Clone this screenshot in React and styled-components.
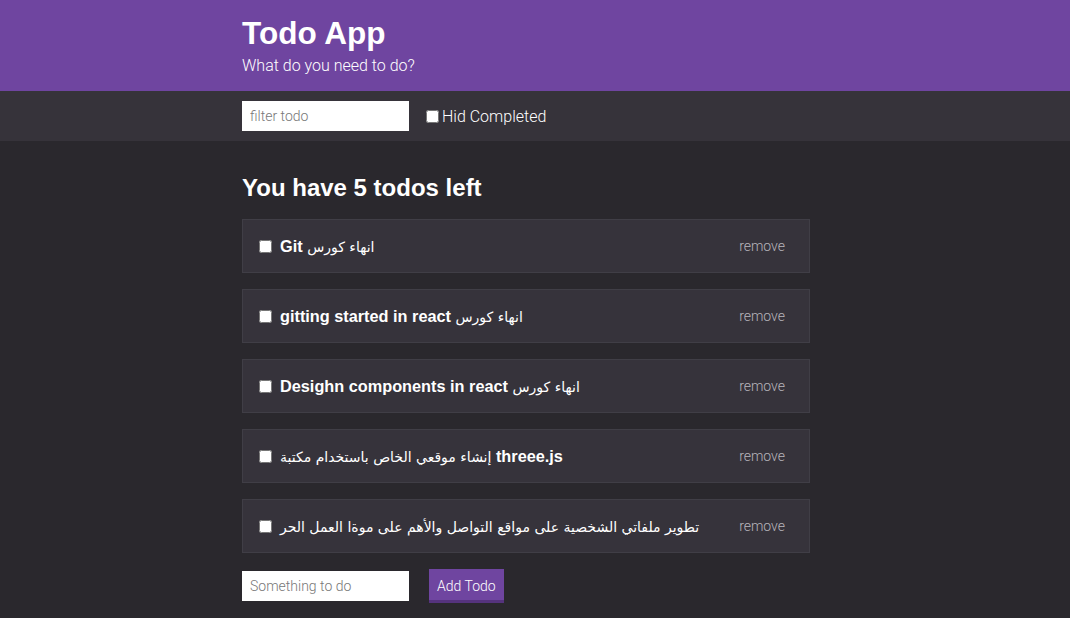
import React from "react";
import styled, { createGlobalStyle } from "styled-components";

const GlobalStyle = createGlobalStyle`
  html, body {
    margin: 0;
    padding: 0;
    background: #2a282d;
    font-family: "Liberation Sans", "DejaVu Sans", Arial, sans-serif;
    color: #fff;
  }
  * {
    box-sizing: border-box;
  }
`;

const Page = styled.div`
  min-height: 618px;
  background: #2a282d;
`;

const Inner = styled.div`
  width: 568px;
  margin-left: 242px;
`;

const Header = styled.header`
  background: #6f45a0;
  padding: 14px 0 15px;
`;

const Title = styled.h1`
  margin: 0;
  font-size: 31.5px;
  line-height: 38px;
  font-weight: 700;
`;

const SubTitle = styled.p`
  margin: 4px 0 0;
  font-family: Roboto, "Liberation Sans", sans-serif;
  font-weight: 300;
  font-size: 16px;
  line-height: 20px;
`;

const FilterBar = styled.div`
  background: #36333a;
  padding: 10px 0;
`;

const Row = styled.div`
  display: flex;
  align-items: center;
`;

const TextInput = styled.input`
  width: 167px;
  height: 30px;
  border: none;
  outline: none;
  background: #fff;
  padding: 0 8px;
  font-family: Roboto, "Liberation Sans", sans-serif;
  font-weight: 300;
  font-size: 14px;
  color: #333;
  &::placeholder {
    color: #777;
  }
`;

const CheckLabel = styled.label`
  display: flex;
  align-items: center;
  margin-left: 13px;
  font-family: Roboto, "Liberation Sans", sans-serif;
  font-weight: 300;
  font-size: 16px;
`;

const Box = styled.input`
  width: 13px;
  height: 13px;
  margin: 0 3px 0 4px;
`;

const Main = styled.main`
  padding: 33px 0 15px;
`;

const Summary = styled.h2`
  margin: 0 0 17px;
  font-size: 24px;
  line-height: 28px;
  font-weight: 700;
`;

const List = styled.div`
  display: flex;
  flex-direction: column;
  gap: 16px;
`;

const Item = styled.div`
  display: flex;
  align-items: center;
  height: 54px;
  background: #36333b;
  border: 1px solid #403e46;
  padding: 0 24px 0 12px;
`;

const ItemLabel = styled.label`
  flex: 1;
  display: flex;
  align-items: center;
  font-size: 16.3px;
  font-weight: 700;
  color: #fff;
  white-space: nowrap;
  ${Box} {
    margin-right: 8px;
  }
`;

const ItemText = styled.span``;

const ArabicRun = styled.span`
  font-family: "DejaVu Sans", sans-serif;
  font-weight: 400;
  font-size: 14px;
`;

const Remove = styled.span`
  font-family: Roboto, "Liberation Sans", sans-serif;
  font-weight: 300;
  font-size: 14px;
  color: #b8b6bc;
  cursor: pointer;
`;

const AddForm = styled.form`
  display: flex;
  align-items: center;
  gap: 20px;
  margin-top: 16px;
`;

const AddButton = styled.button`
  height: 34px;
  padding: 3px 8px 0;
  border: none;
  border-bottom: 3px solid #55337d;
  background: #6f45a0;
  color: #fff;
  font-family: Roboto, "Liberation Sans", sans-serif;
  font-weight: 300;
  font-size: 14px;
`;

const todos = [
  "Git انهاء كورس",
  "gitting started in react انهاء كورس",
  "Desighn components in react انهاء كورس",
  "إنشاء موقعي الخاص باستخدام مكتبة threee.js",
  "تطوير ملفاتي الشخصية على مواقع التواصل والأهم على موةا العمل الحر",
];

// wrap arabic runs so they keep a regular weight
const renderText = (text) =>
  text
    .split(/([\u0600-\u06FF][\u0600-\u06FF\s]*[\u0600-\u06FF]|[\u0600-\u06FF])/)
    .filter(Boolean)
    .map((part, i) =>
      /[\u0600-\u06FF]/.test(part) ? (
        <ArabicRun key={i}>{part}</ArabicRun>
      ) : (
        <React.Fragment key={i}>{part}</React.Fragment>
      )
    );

const App = () => {
  return (
    <>
      <GlobalStyle />
      <Page>
        <Header>
          <Inner>
            <Title>Todo App</Title>
            <SubTitle>What do you need to do?</SubTitle>
          </Inner>
        </Header>
        <FilterBar>
          <Inner>
            <Row>
              <TextInput placeholder="filter todo" />
              <CheckLabel>
                <Box type="checkbox" />
                Hid Completed
              </CheckLabel>
            </Row>
          </Inner>
        </FilterBar>
        <Main>
          <Inner>
            <Summary>You have {todos.length} todos left</Summary>
            <List>
              {todos.map((t, i) => (
                <Item key={i}>
                  <ItemLabel>
                    <Box type="checkbox" />
                    <ItemText>{renderText(t)}</ItemText>
                  </ItemLabel>
                  <Remove>remove</Remove>
                </Item>
              ))}
            </List>
            <AddForm onSubmit={(e) => e.preventDefault()}>
              <TextInput placeholder="Something to do" />
              <AddButton type="submit">Add Todo</AddButton>
            </AddForm>
          </Inner>
        </Main>
      </Page>
    </>
  );
};

export default App;
